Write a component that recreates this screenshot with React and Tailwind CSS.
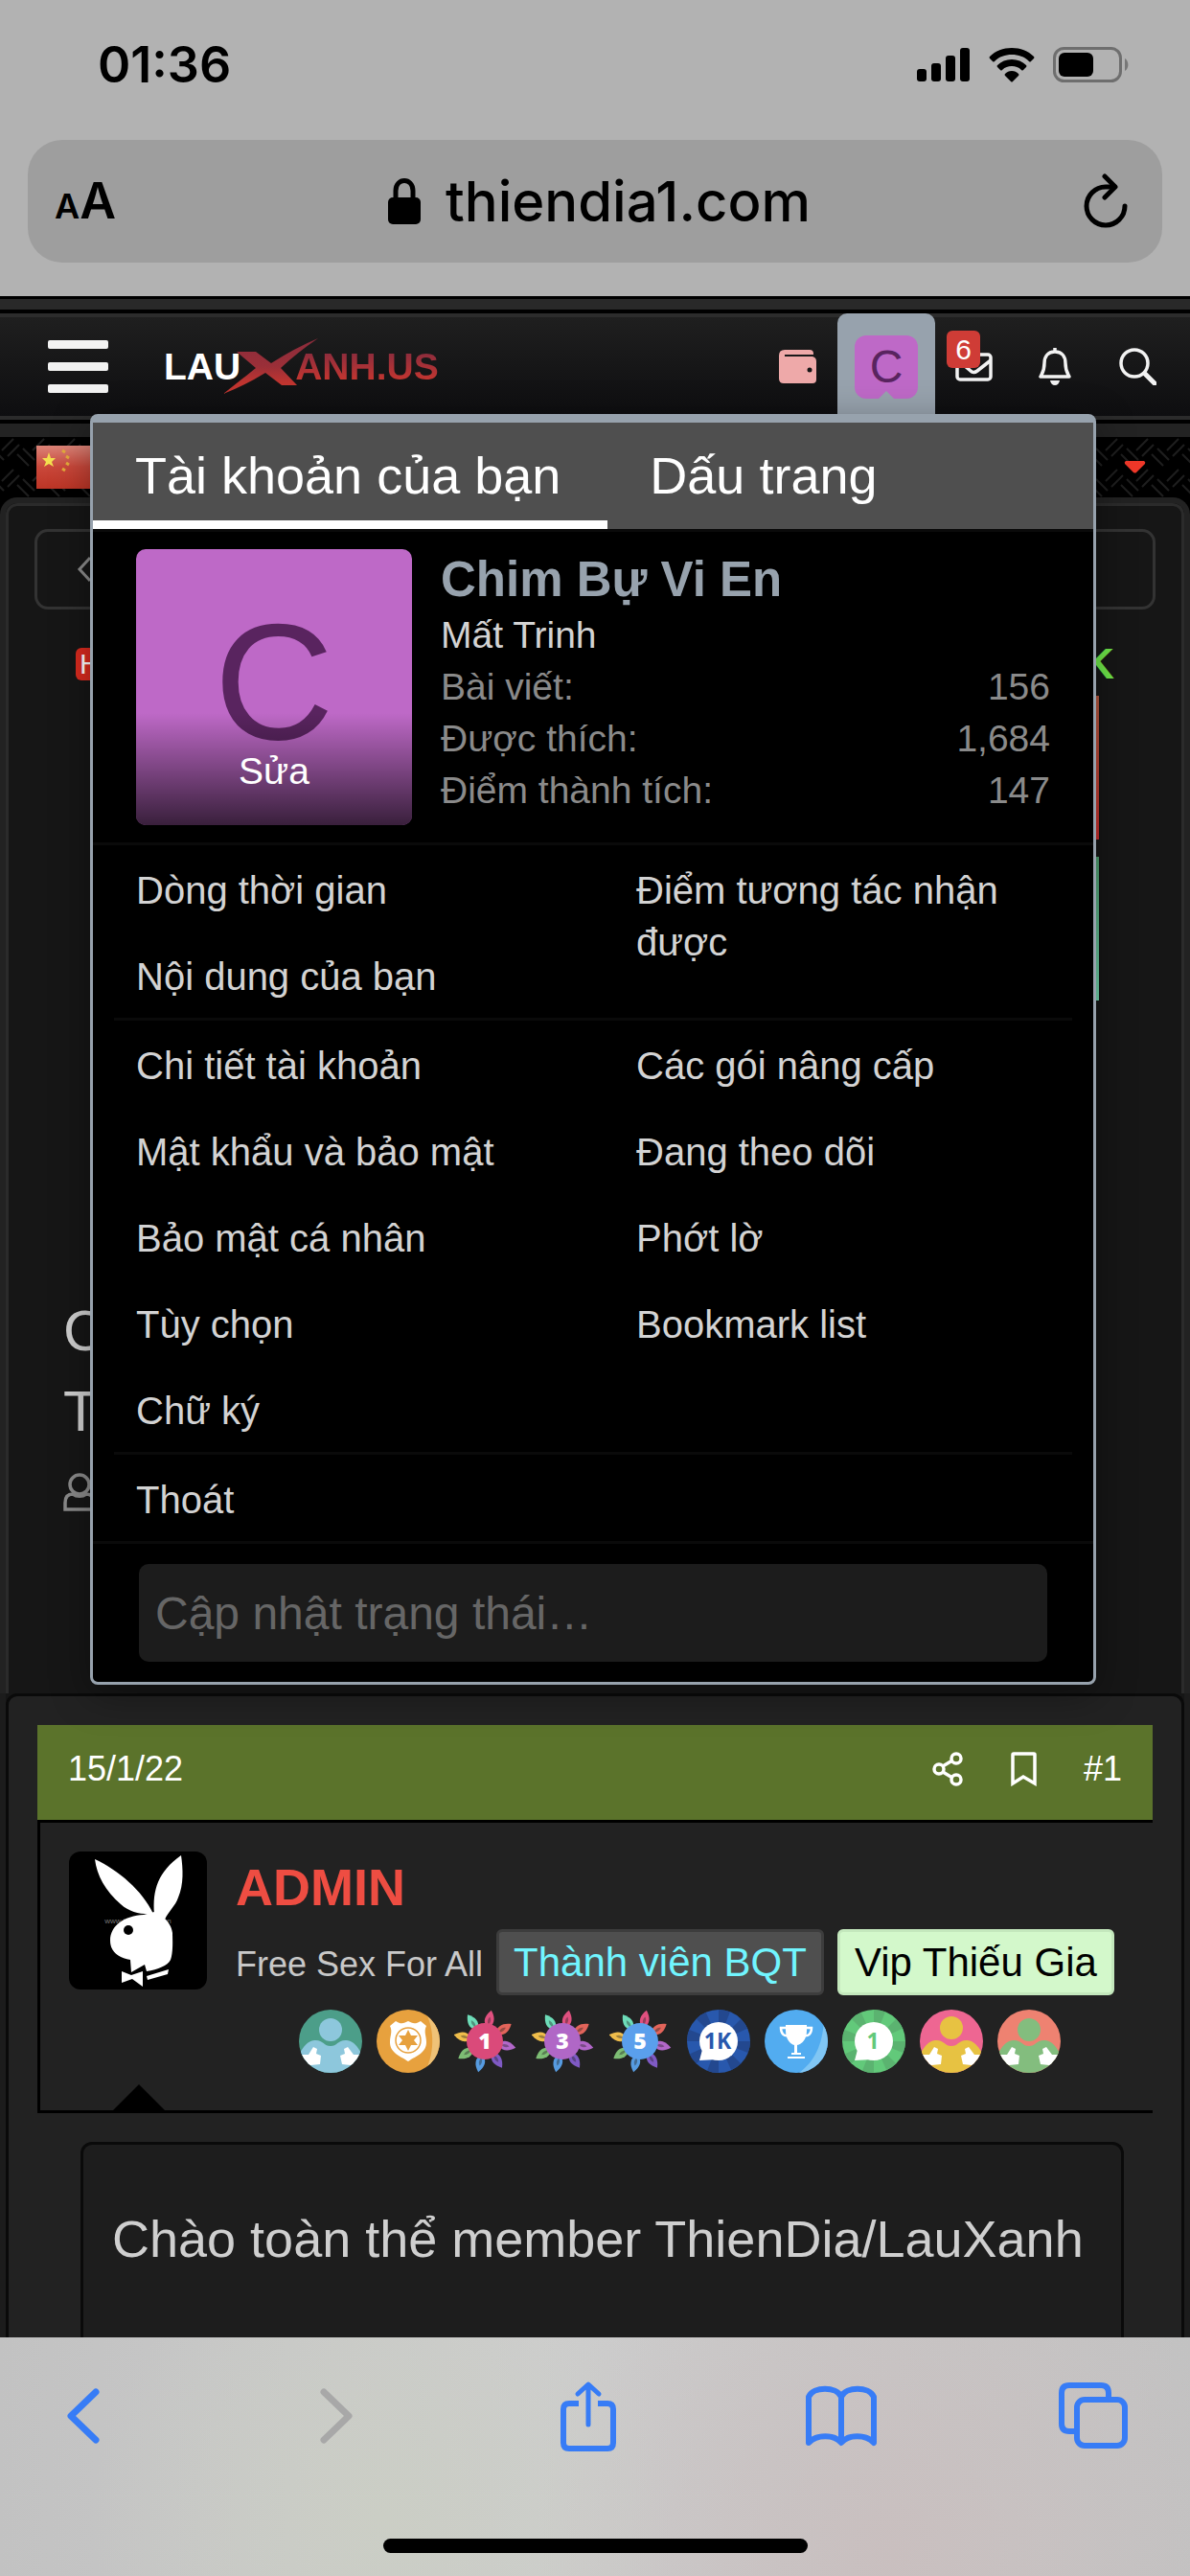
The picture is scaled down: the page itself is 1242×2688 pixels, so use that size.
import { useState } from 'react'

const accountLinks = [
  ['Chi tiết tài khoản', 'Các gói nâng cấp'],
  ['Mật khẩu và bảo mật', 'Đang theo dõi'],
  ['Bảo mật cá nhân', 'Phớt lờ'],
  ['Tùy chọn', 'Bookmark list'],
  ['Chữ ký', ''],
]

const stats = [
  ['Bài viết:', '156'],
  ['Được thích:', '1,684'],
  ['Điểm thành tích:', '147'],
]

const petals = ['#e0507f', '#e2645a', '#b267c9', '#7f5ac4', '#569be0', '#7dbd74', '#efbd4b', '#6ddcb8']

function MenuLink({ children }) {
  return (
    <a href="#" className="block px-[45px] pt-5 pb-4 text-[40px] leading-[54px] text-[#d3d3d3]">
      {children}
    </a>
  )
}

function PeopleBadge({ bg, body, headY }) {
  return (
    <svg viewBox="0 0 66 66" className="size-[66px] rounded-full" aria-hidden="true">
      <rect width="66" height="66" fill={bg} />
      <path d="M0 47 C5 38 9 33 16 32 C25 31 26 38 33 38 C40 38 41 31 50 32 C57 33 61 38 66 47 V66 H0 Z" fill={body} />
      <circle cx="33" cy={headY} r="12" fill={body} />
      <path d="M0 47 H10 L15 39 L19 41 L18 46 L23 48 L22 57 L12 58 L6 57 Z" fill="#fff" />
      <path d="M66 47 H57 L51 39 L47 41 L48 46 L43 48 L45 57 L54 58 L60 57 Z" fill="#fff" />
    </svg>
  )
}

function FlowerBadge({ color, label }) {
  return (
    <svg viewBox="0 0 66 66" className="size-[66px]" aria-label={label}>
      {petals.map((petal, i) => (
        <g key={petal} transform={`rotate(${12 + i * 45} 32 33)`}>
          <path d="M32 0 C38 7 38 13 34 17 H30 C26 13 26 7 32 0 Z" fill={petal} />
          <path d="M32 7 C34 10 34 12 32 16 C30 12 30 10 32 7 Z" fill="#222" opacity="0.4" />
        </g>
      ))}
      <circle cx="32" cy="33" r="19" fill={color} />
      <text x="32" y="41" textAnchor="middle" fontSize="23" fontWeight="800" fill="#fff" fontFamily="Open Sans, sans-serif">
        {label}
      </text>
    </svg>
  )
}

function CountBadge({ light, dark, label }) {
  return (
    <svg viewBox="0 0 66 66" className="size-[66px] rounded-full" aria-label={label}>
      <rect width="66" height="66" fill={light} />
      {[0, 45, 90, 135, 180, 225, 270, 315].map((angle) => (
        <path key={angle} d="M33 33 V-8 H49 Z" fill={dark} transform={`rotate(${angle} 33 33)`} />
      ))}
      <circle cx="33" cy="33" r="20" fill="#fff" />
      <path d="M13 53 L17 38 L32 52 Z" fill="#fff" />
      <text x="32" y="41" textAnchor="middle" fontSize="23" fontWeight="bold" fill={light} fontFamily="Open Sans, sans-serif">
        {label}
      </text>
    </svg>
  )
}

function ShieldBadge() {
  return (
    <svg viewBox="0 0 66 66" className="size-[66px] rounded-full" aria-hidden="true">
      <rect width="66" height="66" fill="#e7a13e" />
      <path d="M50 0 C62 22 60 48 50 66 H66 V0 Z" fill="#efc277" />
      <path d="M20 12 C26 16 29 14 33 12 C37 14 40 16 46 12 L52 17 C49 23 52 27 52 34 C52 45 42 48 33 54 C24 48 14 45 14 34 C14 27 17 23 14 17 Z" fill="#fff" />
      <circle cx="33" cy="32" r="13" fill="none" stroke="#e7a13e" strokeWidth="1.5" />
      <path d="M33 21 L36 27 L43 27 L39 32 L43 37 L36 37 L33 43 L30 37 L23 37 L27 32 L23 27 L30 27 Z" fill="#e7a13e" />
    </svg>
  )
}

function TrophyBadge() {
  return (
    <svg viewBox="0 0 66 66" className="size-[66px] rounded-full" aria-hidden="true">
      <rect width="66" height="66" fill="#52acf0" />
      <path d="M62 12 C60 38 52 54 36 66 H66 V12 Z" fill="#80c6f4" />
      <path d="M22 16 H44 V22 C44 31 39 36 34 37 V47 H31 V37 C27 36 22 31 22 22 Z" fill="#fff" />
      <path d="M23 19 H17 C17 25 20 28 25 27 M43 19 H49 C49 25 46 28 41 27" fill="none" stroke="#fff" strokeWidth="2.5" />
      <path d="M28 46 H38 M24 50 H42" stroke="#fff" strokeWidth="2" />
    </svg>
  )
}

function BunnyAvatar() {
  return (
    <svg viewBox="0 0 144 144" className="size-36 shrink-0 rounded-xl bg-black" aria-label="ADMIN">
      <text x="72" y="75" textAnchor="middle" fontSize="8" fill="#777" fontFamily="Liberation Sans, sans-serif">
        www.jordanchen.cn
      </text>
      <path d="M27 8 C52 20 76 40 88 65 C76 66 64 64 54 55 C38 41 29 25 27 8 Z" fill="#fff" />
      <path d="M117 4 C119 18 120 34 114 48 C111 57 104 62 100 71 L89 65 C87 40 93 21 117 4 Z" fill="#fff" />
      <path d="M78 66 C58 67 43 77 43 93 C43 104 51 111 64 113 L65 126 L79 118 L81 125 C93 123 103 119 106 113 C109 105 108 90 108 85 C107 78 104 74 100 70 L89 63 Z" fill="#fff" />
      <ellipse cx="62" cy="82" rx="5" ry="5" fill="#000" />
      <path d="M55 125 L65 129 L77 125 V141 L66 133 L55 137 Z" fill="#fff" />
      <path d="M81 130 L104 123 L103 128 L82 134 Z" fill="#fff" />
    </svg>
  )
}

function BrowserTop() {
  return (
    <div className="bg-[#b2b2b2] pb-[35px] font-[Inter,sans-serif] text-black">
      <div className="flex h-[146px] items-center justify-between pr-[63px] pb-2.5 pl-[102px]">
        <span className="text-[52px] leading-[60px] font-semibold">01:36</span>
        <div className="flex items-center gap-[19px]">
          <svg viewBox="0 0 56 36" className="h-9 w-14" aria-hidden="true">
            <rect x="0" y="22" width="10" height="13" rx="3" />
            <rect x="15" y="16" width="10" height="19" rx="3" />
            <rect x="30" y="8" width="10" height="27" rx="3" />
            <rect x="45" y="0" width="10" height="35" rx="3" />
          </svg>
          <svg viewBox="0 0 48 36" className="h-9 w-12" aria-hidden="true">
            <path d="M24 0 C33 0 41 3 47 9 Q48 10 47 11 L44 14 Q43 15 42 14 C37 9 31 7 24 7 C17 7 11 9 6 14 Q5 15 4 14 L1 11 Q0 10 1 9 C7 3 15 0 24 0 Z" />
            <path d="M24 12 C30 12 35 14 39 18 Q40 19 39 20 L36 23 Q35 24 34 23 C31 20 28 19 24 19 C20 19 17 20 14 23 Q13 24 12 23 L9 20 Q8 19 9 18 C13 14 18 12 24 12 Z" />
            <path d="M24 24 C27 24 29 25 31 27 Q32 28 31 29 L25 35 Q24 36 23 35 L17 29 Q16 28 17 27 C19 25 21 24 24 24 Z" />
          </svg>
          <svg viewBox="0 0 80 38" className="h-[38px] w-20" aria-hidden="true">
            <rect x="1.500" y="1.500" width="69" height="34" rx="10" fill="none" stroke="#6e6e6e" strokeWidth="3" />
            <rect x="6" y="6" width="36" height="25" rx="6" />
            <path d="M75 12 C79 14 80 22 75 25 Z" fill="#777" />
          </svg>
        </div>
      </div>
      <div className="mx-[29px] flex h-32 items-center justify-between rounded-[36px] bg-[#9e9e9e] pr-[35px] pl-7">
        <button aria-label="Tùy chọn trang" className="flex w-16 items-baseline font-semibold">
          <span className="text-[36px]">A</span>
          <span className="text-[52px]">A</span>
        </button>
        <div className="flex items-center gap-[26px]">
          <svg viewBox="0 0 34 48" className="h-12 w-[34px]" aria-hidden="true">
            <path d="M8 22 V13 C8 -1 26 -1 26 13 V22" fill="none" stroke="#000" strokeWidth="5" />
            <rect x="0" y="20" width="34" height="28" rx="5" />
          </svg>
          <span className="text-[58px] leading-[72px] font-medium">thiendia1.com</span>
        </div>
        <button aria-label="Tải lại">
          <svg viewBox="0 0 48 58" className="h-[58px] w-12" fill="none" stroke="#000" strokeWidth="5" strokeLinecap="round" strokeLinejoin="round">
            <path d="M44 34 A20 20 0 1 1 24 14 L33 14" />
            <path d="M23 3 L34 14 L23 25" />
          </svg>
        </button>
      </div>
    </div>
  )
}

function AccountMenu() {
  const [status, setStatus] = useState('')

  return (
    <div className="absolute top-[101px] right-[98px] left-[94px] rounded-lg border-x-3 border-t-9 border-b-3 border-[#97a2ad] bg-black shadow-[0_10px_40px_rgba(0,0,0,0.35)]">
      <div role="tablist" className="flex h-[111px] bg-[#4f4f4f] text-[54px] leading-[60px] text-white">
        <button role="tab" aria-selected="true" className="border-b-9 border-white pt-2 pr-[49px] pl-[44px]">
          Tài khoản của bạn
        </button>
        <button role="tab" aria-selected="false" className="border-b-9 border-transparent px-[44px] pt-2">
          Dấu trang
        </button>
      </div>

      <div className="flex gap-[30px] border-y-3 border-[#0a0a0a] px-[45px] py-[18px]">
        <a href="#" className="relative flex size-72 shrink-0 items-center justify-center overflow-hidden rounded-[10px] bg-[#be69c7] pb-3 text-[173px] leading-none text-[#59245f]">
          C
          <span className="absolute inset-x-0 bottom-0 h-[117px] bg-gradient-to-b from-transparent to-black/70 pt-[34px] text-center text-[39px] leading-[54px] text-white">
            Sửa
          </span>
        </a>
        <div className="flex-1">
          <h3 className="text-[51px] leading-[63px] font-bold text-[#97a2ad]">Chim Bự Vi En</h3>
          <p className="text-[39px] leading-[54px] text-[#d3d3d3]">Mất Trinh</p>
          <dl className="text-[39px] leading-[54px] text-[#8a8a8a]">
            {stats.map(([label, value]) => (
              <div key={label} className="flex justify-between">
                <dt>{label}</dt>
                <dd>{value}</dd>
              </div>
            ))}
          </dl>
        </div>
      </div>

      <div className="grid grid-cols-2">
        <div>
          <MenuLink>Dòng thời gian</MenuLink>
          <MenuLink>Nội dung của bạn</MenuLink>
        </div>
        <MenuLink>Điểm tương tác nhận được</MenuLink>
      </div>
      <hr className="mx-[22px] border-t-3 border-[#0a0a0a]" />
      <div className="grid grid-cols-2">
        {accountLinks.map(([left, right]) => (
          <div key={left} className="contents">
            <MenuLink>{left}</MenuLink>
            {right ? <MenuLink>{right}</MenuLink> : <span />}
          </div>
        ))}
      </div>
      <hr className="mx-[22px] border-t-3 border-[#0a0a0a]" />
      <MenuLink>Thoát</MenuLink>
      <div className="border-t-3 border-[#0a0a0a] px-12 pt-[21px] pb-[21px]">
        <input
          aria-label="Cập nhật trạng thái"
          value={status}
          onChange={(e) => setStatus(e.target.value)}
          placeholder="Cập nhật trạng thái…"
          className="block h-[102px] w-full rounded-[10px] bg-[#1c1c1c] px-[17px] text-[48px] text-[#d3d3d3] placeholder:text-[#666]"
        />
      </div>
    </div>
  )
}

function SiteHeader() {
  return (
    <header className="relative z-10 bg-black pt-[3px]">
      <div className="h-[15px] border-b-4 border-black bg-[#292929]" />
      <div className="relative flex h-[111px] items-center justify-between border-y-4 border-t-[#2c2c2c] border-b-[#2b2b2b] bg-gradient-to-b from-[#1f1f1f] to-[#0e0e10] pr-[35px] pl-[50px]">
        <div className="flex items-center gap-[58px]">
          <button aria-label="Menu" className="flex w-[63px] flex-col gap-3.5">
            <span className="h-[9px] rounded-xs bg-[#f2f2f2]" />
            <span className="h-[9px] rounded-xs bg-[#f2f2f2]" />
            <span className="h-[9px] rounded-xs bg-[#f2f2f2]" />
          </button>
          <a href="#" className="flex items-center text-[39px] leading-[60px] font-bold">
            <span className="text-white">LAU</span>
            <svg viewBox="81 17 99 59" className="-mr-6 -ml-[18px] h-[59px] w-[99px]" aria-label="X">
              <defs>
                <linearGradient id="logoRed" x1="0" y1="0" x2="0" y2="1">
                  <stop offset="0" stopColor="#8c2c3c" />
                  <stop offset="0.5" stopColor="#9a2f38" />
                  <stop offset="0.8" stopColor="#c03530" />
                </linearGradient>
              </defs>
              <path d="M95 31 H115 L131 43 Q156 27 180 17 Q158 32 141 48 L158 66 H142 L125 53 Q104 66 81 75 Q99 61 115 48 Z" fill="url(#logoRed)" />
            </svg>
            <span className="bg-gradient-to-b from-[#8c2c3c] from-25% to-[#c03530] to-70% bg-clip-text text-transparent">ANH.US</span>
          </a>
        </div>

        <nav className="flex items-center self-stretch">
          <a href="#" aria-label="Ví" className="mr-[22px]">
            <svg viewBox="0 0 39 36" className="h-9 w-[39px]">
              <path d="M6 0 H32 Q36 0 36 4 V5 H6 V7 H35 Q39 8 39 12 V31 Q39 35 35 35 H5 Q0 35 0 30 V6 Q0 0 6 0 Z" fill="#eea9a9" />
              <circle cx="32" cy="21" r="2.500" fill="#151515" />
            </svg>
          </a>
          <button aria-label="Tài khoản" className="relative -mt-1 flex w-[102px] items-start justify-center self-stretch rounded-t-[10px] bg-[#97a2ad] pt-[23px]">
            <span className="flex size-[66px] items-center justify-center rounded-xl bg-[#be69c7] text-[48px] leading-none text-[#59245f]">C</span>
            <span className="absolute bottom-0.5 left-1/2 size-0 -translate-x-1/2 border-x-24 border-b-24 border-x-transparent border-b-[#97a2ad]" />
          </button>
          <a href="#" aria-label="Hộp thư" className="relative ml-[21px]">
            <svg viewBox="0 0 39 30" className="h-[30px] w-[39px]" fill="none" stroke="#f2f2f2" strokeWidth="3.500">
              <rect x="2" y="2" width="35" height="26" rx="3" />
              <path d="M3 8 L16 19 Q19 22 23 19 L37 8" />
            </svg>
            <span className="absolute -top-[23px] -left-[9px] flex h-[39px] w-[35px] items-center justify-center rounded-md bg-[#cf3c36] text-[30px] text-white">6</span>
          </a>
          <a href="#" aria-label="Thông báo" className="ml-12">
            <svg viewBox="0 0 34 39" className="h-[39px] w-[34px]" fill="none" stroke="#f2f2f2" strokeWidth="3.500" strokeLinejoin="round">
              <path d="M17 4 C9 4 6 10 6 16 C6 24 4 26 2 30 H32 C30 26 28 24 28 16 C28 10 25 4 17 4 Z M17 0 V4" />
              <path d="M12 34 H22 Q21 39 17 39 Q13 39 12 34 Z" fill="#f2f2f2" stroke="none" />
            </svg>
          </a>
          <a href="#" aria-label="Tìm kiếm" className="ml-[50px]">
            <svg viewBox="0 0 39 39" className="size-[39px]" fill="none" stroke="#f2f2f2" strokeWidth="3.500" strokeLinecap="round">
              <circle cx="16" cy="16" r="14" />
              <path d="M27 27 L37 37" strokeWidth="5" />
            </svg>
          </a>
        </nav>
        <AccountMenu />
      </div>
      <div className="mt-1 h-[14px] bg-[#232323]" />
    </header>
  )
}

function LanguageBar() {
  return (
    <div className="relative flex h-[63px] items-center justify-between bg-black px-[38px]">
      <svg className="absolute inset-0 size-full" aria-hidden="true">
        <defs>
          <pattern id="weave" width="32" height="32" patternUnits="userSpaceOnUse">
            <path d="M2 14 L14 2 M8 20 L20 8 M18 18 L30 30 M24 12 L36 24 M-8 12 L4 24" stroke="#1e1e1e" strokeWidth="2" />
          </pattern>
        </defs>
        <rect width="100%" height="100%" fill="url(#weave)" />
      </svg>
      <svg viewBox="0 0 66 45" className="relative h-[45px] w-[66px]" aria-label="中文">
        <defs>
          <linearGradient id="flagShine" x1="0" y1="0" x2="0" y2="1">
            <stop offset="0" stopColor="#dc8478" />
            <stop offset="0.5" stopColor="#c9473a" />
            <stop offset="1" stopColor="#bd3526" />
          </linearGradient>
        </defs>
        <rect width="66" height="45" fill="url(#flagShine)" />
        <path d="M13 7 L15 13 L20 13 L16 17 L18 22 L13 19 L8 22 L10 17 L6 13 L11 13 Z" fill="#f4e04f" />
        <path d="M27 5 l3 2 M31 11 l3 2 M31 18 l3 2 M27 24 l3 2" stroke="#e5ac3b" strokeWidth="3" />
      </svg>
      <button aria-label="Mở danh sách" className="relative mr-2">
        <svg viewBox="0 0 23 13" className="h-[13px] w-[23px]">
          <path d="M2 0 H21 Q23 1 22 3 L13 12 Q12 13 10 12 L1 3 Q0 1 2 0 Z" fill="#ef3829" />
        </svg>
      </button>
    </div>
  )
}

function ThreadIntro() {
  return (
    <section className="rounded-t-[18px] border-x-6 border-t-6 border-[#222]">
      <div className="h-[1242px] overflow-hidden rounded-t-xl border-x-3 border-t-3 border-[#2b2b2b] bg-[#161616] pt-6">
        <a href="#" aria-label="Quay lại" className="mx-[27px] flex h-[84px] items-center rounded-[14px] border-3 border-[#333] pl-[41px]">
          <svg viewBox="0 0 16 28" className="h-7 w-4" fill="none" stroke="#8a8a8a" strokeWidth="3">
            <path d="M14 2 L3 14 L14 26" />
          </svg>
        </a>
        <div className="mt-[33px] flex h-12 items-center justify-between px-[70px]">
          <span className="rounded-md bg-[#d92a1e] px-1 text-[30px] leading-[34px] text-white">H</span>
          <span className="text-[45px] leading-[54px] font-bold text-[#6fe64a]">K</span>
        </div>
        <div className="mx-[86px] mt-[9px] h-[150px] bg-gradient-to-b from-[#b0563e] to-[#c52b2b]" />
        <div className="mx-[86px] mt-[18px] h-[150px] bg-gradient-to-b from-[#4d9a6c] to-[#6fd0aa]" />
        <h1 className="mt-[303px] ml-[57px] w-12 text-[60px] leading-[84px] text-[#cfcfcf]">
          C<br />T
        </h1>
        <svg viewBox="0 0 34 40" className="mt-[22px] ml-[57px] h-10 w-[34px]" fill="none" stroke="#8a8a8a" strokeWidth="3.500">
          <circle cx="17" cy="12" r="10" />
          <path d="M10 22 C4 22 2 26 2 31 V38 H32 V31 C32 26 30 22 24 22 C20 25 14 25 10 22 Z" />
        </svg>
      </div>
    </section>
  )
}

function Post() {
  return (
    <section className="flex flex-1 flex-col border-x-6 border-[#1c1c1c] bg-[#161616]">
      <article className="flex flex-1 flex-col rounded-t-xl border-x-3 border-t-3 border-[#0a0a0a] bg-[#222] px-[30px] pt-[30px]">
        <div className="flex items-center bg-[#5b732b] px-8 pt-5 pb-7 text-[36px] leading-[51px] text-white">
          <a href="#" className="mr-auto">15/1/22</a>
          <a href="#" aria-label="Chia sẻ" className="mr-[49px]">
            <svg viewBox="0 0 33 36" className="h-9 w-[33px]" fill="none" stroke="#fff" strokeWidth="3.500">
              <circle cx="25" cy="7" r="5" />
              <circle cx="7" cy="18" r="5" />
              <circle cx="25" cy="29" r="5" />
              <path d="M11 15 L21 9 M11 21 L21 27" />
            </svg>
          </a>
          <a href="#" aria-label="Đánh dấu" className="mr-[49px]">
            <svg viewBox="0 0 27 36" className="h-9 w-[27px]" fill="none" stroke="#fff" strokeWidth="3.500">
              <path d="M2 3 Q2 2 3 2 H24 Q25 2 25 3 V33 L13 26 L2 33 Z" />
            </svg>
          </a>
          <a href="#">#1</a>
        </div>

        <div className="relative flex gap-[30px] border-y-3 border-l-3 border-black px-[30px] pt-[30px] pb-[39px]">
          <BunnyAvatar />
          <div className="flex-1 pt-[7px]">
            <h4 className="text-[54px] leading-[60px] font-bold text-[#ee4d42]">ADMIN</h4>
            <div className="mt-3.5 flex items-baseline gap-3.5 whitespace-nowrap">
              <span className="text-[36px] leading-[51px] text-[#c8c8c8]">Free Sex For All</span>
              <span className="rounded-md border-3 border-[#3d3d3d] bg-[#4f4f4f] px-[15px] text-[42px] leading-[63px] text-[#71f5ff]">Thành viên BQT</span>
              <span className="rounded-md border-3 border-[#c4e8bd] bg-[#d3f8cb] px-[15px] text-[42px] leading-[63px] text-black">Vip Thiếu Gia</span>
            </div>
            <div className="mt-[15px] flex justify-center gap-[15px]">
              <PeopleBadge bg="#4c9e89" body="#8dc7dc" headY={21} />
              <ShieldBadge />
              <FlowerBadge color="#da4a7a" label="1" />
              <FlowerBadge color="#b067c6" label="3" />
              <FlowerBadge color="#5a9fec" label="5" />
              <CountBadge light="#2858ad" dark="#23488f" label="1K" />
              <TrophyBadge />
              <CountBadge light="#62c97a" dark="#5bb370" label="1" />
              <PeopleBadge bg="#ee6692" body="#e7c242" headY={19} />
              <PeopleBadge bg="#ee8271" body="#83bd7e" headY={21} />
            </div>
          </div>
          <span className="absolute bottom-0 left-[76px] border-x-27 border-b-27 border-x-transparent border-b-black" />
        </div>

        <div className="mt-[30px] mr-[30px] ml-[45px] flex-1 rounded-t-xl border-x-3 border-t-3 border-[#0a0a0a] bg-[#1d1d1d] px-[30px] pt-[65px] text-[54px] leading-[66px] whitespace-nowrap text-[#cfcfcf]">
          Chào toàn thể member ThienDia/LauXanh
        </div>
      </article>
    </section>
  )
}

function BrowserBottom() {
  return (
    <footer className="bg-[radial-gradient(circle_at_32%_75%,#cbcec5,transparent_35%),radial-gradient(circle_at_75%_90%,#c9bfbf,transparent_40%),linear-gradient(90deg,#c2c2c2,#cdcdcd_45%,#c2c2c2)] pb-6">
      <div className="flex h-[186px] items-center justify-between pr-[61px] pb-[22px] pl-[47px] text-[#377cf6]">
        <button aria-label="Trang trước" className="flex w-20 justify-center">
          <svg viewBox="0 0 34 58" className="h-[58px] w-[34px]" fill="none" stroke="currentColor" strokeWidth="7" strokeLinecap="round" strokeLinejoin="round">
            <path d="M30 4 L4 29 L30 54" />
          </svg>
        </button>
        <button aria-label="Trang sau" disabled className="flex w-20 justify-center text-[#a8a8a8]">
          <svg viewBox="0 0 34 58" className="h-[58px] w-[34px]" fill="none" stroke="currentColor" strokeWidth="7" strokeLinecap="round" strokeLinejoin="round">
            <path d="M4 4 L30 29 L4 54" />
          </svg>
        </button>
        <button aria-label="Chia sẻ" className="flex w-20 justify-center">
          <svg viewBox="0 0 58 74" className="h-[74px] w-[58px]" fill="none" stroke="currentColor" strokeWidth="6" strokeLinejoin="round">
            <path d="M19 24 H9 Q3 24 3 30 V65 Q3 71 9 71 H49 Q55 71 55 65 V30 Q55 24 49 24 H39" />
            <path d="M29 46 V5 M18 14 L29 4 L40 14" strokeWidth="5" strokeLinecap="round" />
          </svg>
        </button>
        <button aria-label="Dấu trang" className="flex w-20 justify-center">
          <svg viewBox="0 0 74 64" className="h-16 w-[74px]" fill="none" stroke="currentColor" strokeWidth="6" strokeLinejoin="round">
            <path d="M37 12 C32 1 8 1 3 12 V60 C11 51 30 51 37 60 C44 51 63 51 71 60 V12 C66 1 42 1 37 12 V60" />
          </svg>
        </button>
        <button aria-label="Các tab" className="flex w-20 justify-center">
          <svg viewBox="0 0 72 70" className="h-[70px] w-[72px]" fill="none" stroke="currentColor" strokeWidth="6">
            <path d="M18 51 H11 Q3 51 3 43 V11 Q3 3 11 3 H44 Q52 3 52 11 V16" />
            <rect x="19" y="18" width="50" height="48" rx="8" />
          </svg>
        </button>
      </div>
      <div className="mx-auto mt-6 h-[15px] w-[443px] rounded-full bg-black" />
    </footer>
  )
}

export default function App() {
  return (
    <div className="flex min-h-screen flex-col overflow-hidden bg-black font-['Liberation_Sans',Arial,sans-serif]">
      <BrowserTop />
      <SiteHeader />
      <LanguageBar />
      <ThreadIntro />
      <Post />
      <BrowserBottom />
    </div>
  )
}
